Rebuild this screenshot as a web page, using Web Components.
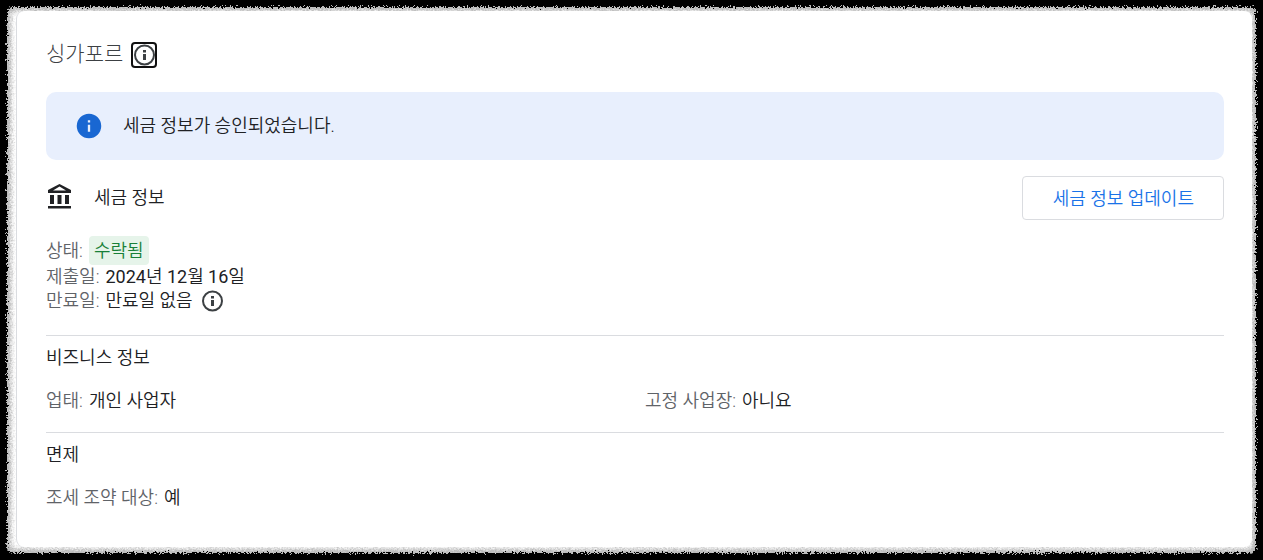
<!DOCTYPE html>
<html lang="ko">
<head>
<meta charset="utf-8">
<title>세금 정보</title>
<style>
body { margin: 0; background: #000; font-family: Roboto, "Noto Sans CJK KR", sans-serif; font-size: 18px; line-height: 24px; font-weight: 350; color: #202124; }
b { font-weight: 400; }
</style>
</head>
<body>
<torn-frame>
  <tax-card>
    <region-title>싱가포르</region-title>
    <info-banner>세금 정보가 승인되었습니다.</info-banner>
    <tax-summary>
      <span slot="title">세금 정보</span>
      <span slot="action">세금 정보 업데이트</span>
    </tax-summary>
    <detail-section>
      <detail-row label="상태:" chip>수락됨</detail-row>
      <detail-row label="제출일:"><b>2024</b>년 <b>12</b>월 <b>16</b>일</detail-row>
      <detail-row label="만료일:">만료일 없음<info-button slot="after"></info-button></detail-row>
    </detail-section>
    <detail-section heading="비즈니스 정보" columns>
      <detail-row label="업태:">개인 사업자</detail-row>
      <detail-row label="고정 사업장:">아니요</detail-row>
    </detail-section>
    <detail-section heading="면제" columns>
      <detail-row label="조세 조약 대상:">예</detail-row>
    </detail-section>
  </tax-card>
</torn-frame>
<script>
const define = (name, html) => customElements.define(name, class extends HTMLElement {
  constructor() {
    super();
    this.attachShadow({ mode: 'open' }).innerHTML = html;
  }
  connectedCallback() {
    for (const key of ['label', 'heading']) {
      const target = this.shadowRoot.querySelector('.' + key);
      if (!target) continue;
      if (this.hasAttribute(key)) target.textContent = this.getAttribute(key);
      else target.remove();
    }
  }
});

define('torn-frame', `
<style>
  :host { display: block; position: relative; box-sizing: border-box; min-height: 100vh; padding: 11px 11px 11px 16px; isolation: isolate; }
  .paper { position: absolute; inset: 7px; z-index: -1; border-radius: 6px; background: #fff; box-shadow: inset 0 0 5px 4px #b4b4b4; filter: url(#torn); }
  svg { position: absolute; width: 0; height: 0; }
</style>
<svg aria-hidden="true"><filter id="torn" x="-2%" y="-2%" width="104%" height="104%" color-interpolation-filters="sRGB">
  <feTurbulence type="fractalNoise" baseFrequency="0.6" numOctaves="2" seed="4" result="noise"/>
  <feDisplacementMap in="SourceGraphic" in2="noise" scale="8" xChannelSelector="R" yChannelSelector="G" result="torn"/>
  <feGaussianBlur in="torn" stdDeviation="0.5"/>
</filter></svg>
<div class="paper"></div>
<slot></slot>`);

define('tax-card', `
<style>
  :host { display: block; box-sizing: border-box; min-height: calc(100vh - 24px); padding: 28px 28px 36px 29px; border-left: 1px solid #dadce0; border-radius: 8px; background: #fff; }
</style>
<slot></slot>`);

define('info-button', `
<style>
  :host { display: inline-flex; margin: -1px 0; }
  button { display: flex; padding: 0; border: 0; border-radius: 4px; background: none; color: #3c4043; }
  :host([focused]) button { box-shadow: inset 0 0 0 2px #101010; }
  svg { width: 26px; height: 26px; fill: currentColor; }
</style>
<button type="button" aria-label="정보"><svg viewBox="0 0 26 26"><path fill-rule="evenodd" d="M13.500 2.500a10.500 10.500 0 1 0 0 21 10.500 10.500 0 0 0 0-21zm0 2a8.500 8.500 0 1 1 0 17 8.500 8.500 0 0 1 0-17zM12 8h3v2.500h-3zM12 12h3v6h-3z"/></svg></button>`);

define('region-title', `
<style>
  :host { display: flex; align-items: center; gap: 8px; height: 32px; color: #3c4043; }
  h1 { margin: 0; padding-bottom: 2px; font-size: 21px; line-height: 28px; font-weight: 300; }
</style>
<h1><slot></slot></h1><info-button focused></info-button>`);

define('info-banner', `
<style>
  :host { display: flex; align-items: center; gap: 20px; margin-top: 21px; padding: 20px 29px; border-radius: 10px; background: #e8effd; line-height: 28px; }
  svg { width: 28px; height: 28px; }
</style>
<svg viewBox="0 0 24 24" aria-hidden="true"><path fill="#1967d2" d="M12 1.500a10.500 10.500 0 1 0 0 21 10.500 10.500 0 0 0 0-21zm1 15.500h-2v-6h2v6zm0-8h-2V7h2v2z"/></svg>
<span><slot></slot></span>`);

define('tax-summary', `
<style>
  :host { display: flex; align-items: center; gap: 20px; margin-top: 16px; }
  svg { width: 28px; height: 28px; fill: #202124; }
  h2 { flex: 1; margin: 0; font-size: 18px; font-weight: inherit; }
  button { padding: 10px 29px 8px 30px; border: 1px solid #dadce0; border-radius: 4px; background: #fff; color: #1a73e8; font: inherit; }
</style>
<svg viewBox="0 0 28 28" aria-hidden="true"><path d="M13.500 0 2 6v3h23V6zm0 2.600L20 6.500H7zM4 11h4v9H4zm7.500 0h4v9h-4zm7.500 0h4v9h-4zM2 22h23v2.500H2z" fill-rule="evenodd"/></svg>
<h2><slot name="title"></slot></h2>
<button type="button"><slot name="action"></slot></button>`);

define('detail-section', `
<style>
  :host { display: block; margin-top: 16px; padding-bottom: 3px; }
  :host([heading]) { margin-top: 19px; padding: 10px 0 0; border-top: 1px solid #dadce0; }
  h3 { margin: 0 0 19px; font-size: 18px; font-weight: inherit; }
  :host([columns]) .rows { display: grid; grid-template-columns: 1fr 1fr; column-gap: 20px; }
</style>
<h3 class="heading"></h3>
<div class="rows"><slot></slot></div>`);

define('detail-row', `
<style>
  :host { display: flex; align-items: center; gap: 6px; }
  .label { color: #5f6368; }
  :host([chip]) .value { padding: 3px 5px 2px; border-radius: 4px; background: #e6f4ea; color: #188038; }
</style>
<span class="label"></span><span class="value"><slot></slot></span><slot name="after"></slot>`);
</script>
</body>
</html>
